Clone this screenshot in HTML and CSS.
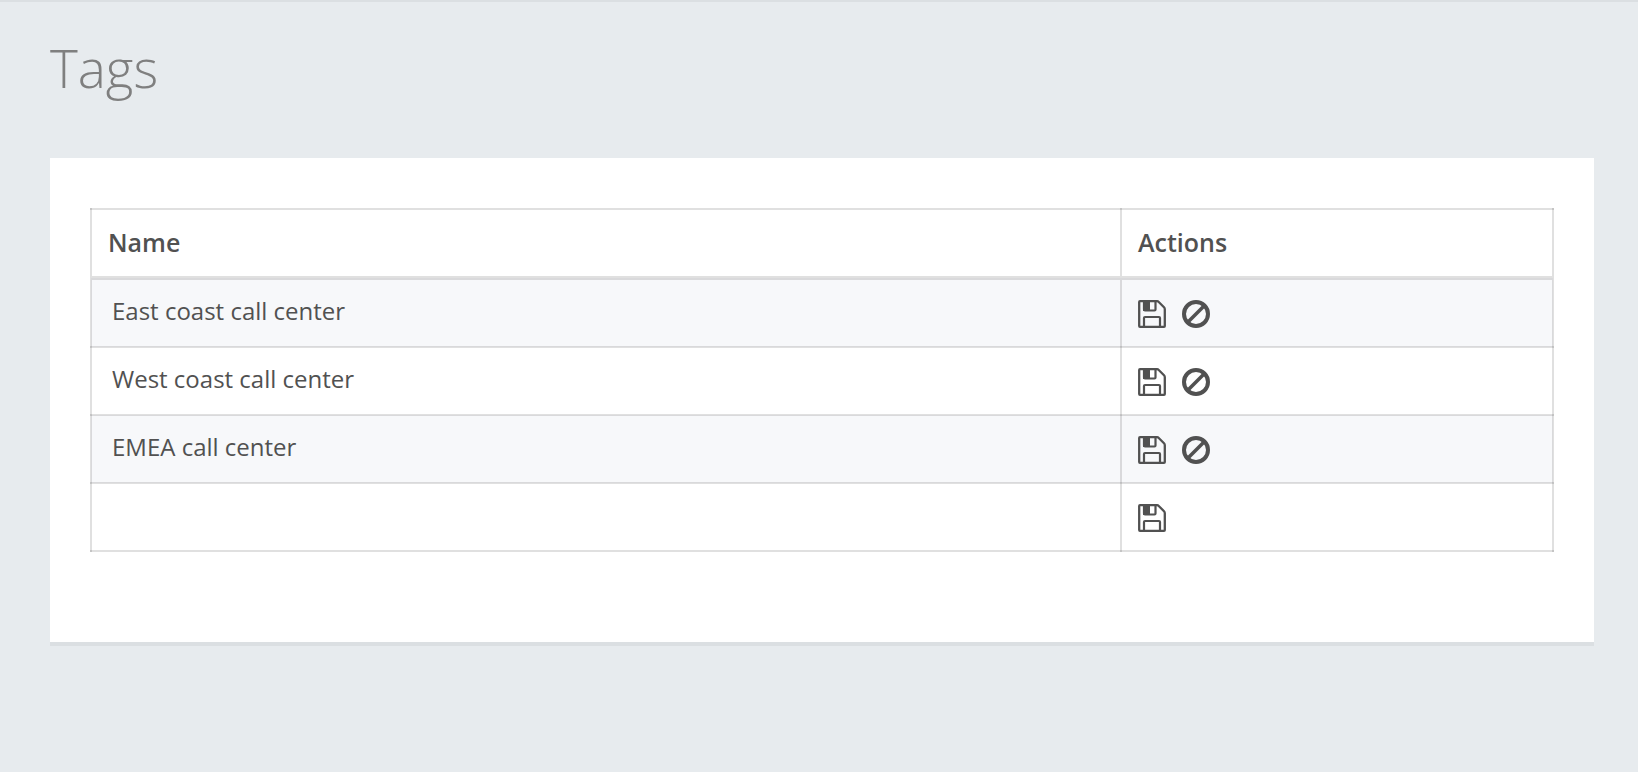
FILE: index.html
```html
<!DOCTYPE html>
<html lang="en">
<head>
    <meta charset="UTF-8">
    <meta name="viewport" content="width=device-width, initial-scale=1.0">
    <title>Tags</title>
    <link rel="stylesheet" href="styles.css">
</head>
<body>
    <svg class="sprite" aria-hidden="true">
        <symbol id="icon-save" viewBox="0 0 28 28">
            <path d="M2 1.200h17q1 0 2 1l5 5q.8.8.8 2V26q0 .8-.8.8H2q-.8 0-.8-.8V2q0-.8.8-.8z" fill="none" stroke="currentColor" stroke-width="2.300"/>
            <path d="M6 1v8.500q0 1 1 1h9.500q1 0 1-1V1M6 27v-9q0-1 1-1h14q1 0 1 1v9" fill="none" stroke="currentColor" stroke-width="2.200"/>
            <path d="M5 1h7v10H5z" fill="currentColor"/>
        </symbol>
        <symbol id="icon-ban" viewBox="0 0 28 28">
            <circle cx="14" cy="14" r="12" fill="none" stroke="currentColor" stroke-width="4"/>
            <path d="M6 22L22 6" stroke="currentColor" stroke-width="3.600"/>
        </symbol>
    </svg>

    <main class="page">
        <h1 class="page-title">Tags</h1>
        <section class="card">
            <table class="tags">
                <thead>
                    <tr>
                        <th>Name</th>
                        <th class="actions-col">Actions</th>
                    </tr>
                </thead>
                <tbody>
                    <tr>
                        <td><input class="tag-name" type="text" aria-label="Tag name" value="East coast call center"></td>
                        <td>
                            <div class="actions">
                                <button type="button" aria-label="Save"><svg><use href="#icon-save"/></svg></button>
                                <button type="button" aria-label="Disable"><svg><use href="#icon-ban"/></svg></button>
                            </div>
                        </td>
                    </tr>
                    <tr>
                        <td><input class="tag-name" type="text" aria-label="Tag name" value="West coast call center"></td>
                        <td>
                            <div class="actions">
                                <button type="button" aria-label="Save"><svg><use href="#icon-save"/></svg></button>
                                <button type="button" aria-label="Disable"><svg><use href="#icon-ban"/></svg></button>
                            </div>
                        </td>
                    </tr>
                    <tr>
                        <td><input class="tag-name" type="text" aria-label="Tag name" value="EMEA call center"></td>
                        <td>
                            <div class="actions">
                                <button type="button" aria-label="Save"><svg><use href="#icon-save"/></svg></button>
                                <button type="button" aria-label="Disable"><svg><use href="#icon-ban"/></svg></button>
                            </div>
                        </td>
                    </tr>
                    <tr>
                        <td><input class="tag-name" type="text" aria-label="New tag name"></td>
                        <td>
                            <div class="actions">
                                <button type="button" aria-label="Save"><svg><use href="#icon-save"/></svg></button>
                            </div>
                        </td>
                    </tr>
                </tbody>
            </table>
        </section>
    </main>
</body>
</html>
```
FILE: styles.css
```css
* {
    box-sizing: border-box;
}

body {
    margin: 0;
    background-color: #e7ebee;
    color: #515151;
    font-family: "Open Sans", "Noto Sans", sans-serif;
    font-size: 24px;
}

.sprite {
    display: none;
}

.page {
    min-height: 100vh;
    padding: 30px 44px 40px 50px;
    border-top: 2px solid #dbdfe2;
}

.page-title {
    margin: 0 0 54px;
    color: #7f7f7f;
    font-size: 53px;
    font-weight: 300;
    line-height: 72px;
}

.card {
    padding: 50px 40px 90px;
    background-color: #fff;
    box-shadow: 0 4px 0 #dbdfe2;
}

/* Tags table */
.tags {
    width: 100%;
    border-collapse: collapse;
    table-layout: fixed;
}

.tags th,
.tags td {
    border: 2px solid rgba(0, 0, 0, 0.12);
    text-align: left;
    vertical-align: top;
}

.tags th {
    padding: 14px 16px 16px;
    border-bottom-width: 4px;
    font-size: 25px;
    font-weight: 600;
    line-height: 36px;
}

.tags td {
    height: 68px;
    padding: 13px 16px;
}

/* makes up for the thicker header border */
.tags tbody tr:first-child td {
    height: 69px;
}

.tags tbody tr:nth-child(odd) {
    background-color: #f7f8fa;
}

.actions-col {
    width: 432px;
}

.tag-name {
    display: block;
    width: 100%;
    height: 34px;
    padding: 0 4px;
    border: 0;
    background: none;
    color: inherit;
    font: inherit;
}

.actions {
    display: flex;
    gap: 16px;
    padding-top: 7px;
}

.actions button {
    width: 28px;
    height: 28px;
    padding: 0;
    border: 0;
    background: none;
    color: inherit;
    cursor: pointer;
}

.actions svg {
    display: block;
    width: 28px;
    height: 28px;
}
```
